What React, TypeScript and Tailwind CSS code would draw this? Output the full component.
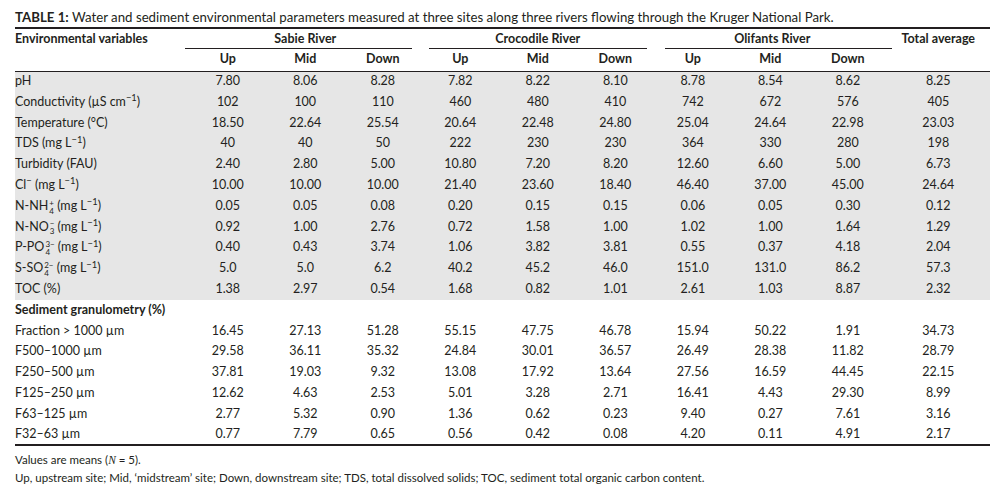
import React from "react";

type Row = { label: React.ReactNode; values: string[] };

// sub and sup stacked over one another, as in NH4+ / PO4 3-
const Stack = ({ sub, sup }: { sub: string; sup: string }) => (
  <span className="inline-flex flex-col align-middle text-[8px] leading-[8px] ml-[1px]">
    <span>{sup}</span>
    <span>{sub}</span>
  </span>
);

const mgL = (
  <>
    {" "}(mg L<sup>−1</sup>)
  </>
);

const water: Row[] = [
  { label: "pH", values: ["7.80", "8.06", "8.28", "7.82", "8.22", "8.10", "8.78", "8.54", "8.62", "8.25"] },
  {
    label: (
      <>
        Conductivity (µS cm<sup>−1</sup>)
      </>
    ),
    values: ["102", "100", "110", "460", "480", "410", "742", "672", "576", "405"],
  },
  { label: "Temperature (°C)", values: ["18.50", "22.64", "25.54", "20.64", "22.48", "24.80", "25.04", "24.64", "22.98", "23.03"] },
  { label: <>TDS{mgL}</>, values: ["40", "40", "50", "222", "230", "230", "364", "330", "280", "198"] },
  { label: "Turbidity (FAU)", values: ["2.40", "2.80", "5.00", "10.80", "7.20", "8.20", "12.60", "6.60", "5.00", "6.73"] },
  {
    label: (
      <>
        Cl<sup>−</sup>{mgL}
      </>
    ),
    values: ["10.00", "10.00", "10.00", "21.40", "23.60", "18.40", "46.40", "37.00", "45.00", "24.64"],
  },
  {
    label: (
      <>
        N-NH<Stack sub="4" sup="+" />{mgL}
      </>
    ),
    values: ["0.05", "0.05", "0.08", "0.20", "0.15", "0.15", "0.06", "0.05", "0.30", "0.12"],
  },
  {
    label: (
      <>
        N-NO<Stack sub="3" sup="−" />{mgL}
      </>
    ),
    values: ["0.92", "1.00", "2.76", "0.72", "1.58", "1.00", "1.02", "1.00", "1.64", "1.29"],
  },
  {
    label: (
      <>
        P-PO<Stack sub="4" sup="3−" />{mgL}
      </>
    ),
    values: ["0.40", "0.43", "3.74", "1.06", "3.82", "3.81", "0.55", "0.37", "4.18", "2.04"],
  },
  {
    label: (
      <>
        S-SO<Stack sub="4" sup="2−" />{mgL}
      </>
    ),
    values: ["5.0", "5.0", "6.2", "40.2", "45.2", "46.0", "151.0", "131.0", "86.2", "57.3"],
  },
  { label: "TOC (%)", values: ["1.38", "2.97", "0.54", "1.68", "0.82", "1.01", "2.61", "1.03", "8.87", "2.32"] },
];

const sediment: Row[] = [
  { label: "Fraction > 1000 µm", values: ["16.45", "27.13", "51.28", "55.15", "47.75", "46.78", "15.94", "50.22", "1.91", "34.73"] },
  { label: "F500–1000 µm", values: ["29.58", "36.11", "35.32", "24.84", "30.01", "36.57", "26.49", "28.38", "11.82", "28.79"] },
  { label: "F250–500 µm", values: ["37.81", "19.03", "9.32", "13.08", "17.92", "13.64", "27.56", "16.59", "44.45", "22.15"] },
  { label: "F125–250 µm", values: ["12.62", "4.63", "2.53", "5.01", "3.28", "2.71", "16.41", "4.43", "29.30", "8.99"] },
  { label: "F63–125 µm", values: ["2.77", "5.32", "0.90", "1.36", "0.62", "0.23", "9.40", "0.27", "7.61", "3.16"] },
  { label: "F32–63 µm", values: ["0.77", "7.79", "0.65", "0.56", "0.42", "0.08", "4.20", "0.11", "4.91", "2.17"] },
];

const DataRow = ({ row, last }: { row: Row; last?: boolean }) => (
  <tr className={last ? "h-[20.8px] border-b-2 border-[#231f20]" : "h-[20.8px]"}>
    <td className="text-left p-0 whitespace-nowrap">{row.label}</td>
    {row.values.map((v, i) => (
      <td key={i} className="text-center p-0">
        {v}
      </td>
    ))}
  </tr>
);

export default function App() {
  return (
    <div className="w-[1007px] h-[500px] bg-white pl-[15px] pr-[17px] pt-[8px] font-['Lato',sans-serif] text-[#231f20]">
      <p className="text-[13.25px] leading-[18px] pb-[1px] border-b-2 border-[#231f20] whitespace-nowrap">
        <b>TABLE 1:</b> Water and sediment environmental parameters measured at three sites along three rivers flowing
        through the Kruger National Park.
      </p>
      <table className="w-full table-fixed border-collapse text-[12.5px]">
        <colgroup>
          <col className="w-[174px]" />
          {Array.from({ length: 9 }).map((_, i) => (
            <col key={i} className="w-[77.5px]" />
          ))}
          <col />
        </colgroup>
        <thead className="font-bold">
          <tr>
            <th rowSpan={2} className="text-left align-top p-0 leading-[20px]">
              Environmental variables
            </th>
            <th colSpan={3} className="p-0 font-bold">
              <div className="h-[20px] leading-[20px] border-b border-[#231f20] ml-[-4px] mr-[10px] pl-[14px]">
                Sabie River
              </div>
            </th>
            <th colSpan={3} className="p-0 font-bold">
              <div className="h-[20px] leading-[20px] border-b border-[#231f20] ml-[7px] mr-[7px]">Crocodile River</div>
            </th>
            <th colSpan={3} className="p-0 font-bold">
              <div className="h-[20px] leading-[20px] border-b border-[#231f20] ml-[11px] mr-[-5px] pr-[12px]">
                Olifants River
              </div>
            </th>
            <th rowSpan={2} className="align-top p-0 leading-[20px]">
              Total average
            </th>
          </tr>
          <tr className="h-[22px] border-b border-[#231f20]">
            {["Up", "Mid", "Down", "Up", "Mid", "Down", "Up", "Mid", "Down"].map((h, i) => (
              <th key={i} className="p-0 font-bold">
                {h}
              </th>
            ))}
          </tr>
        </thead>
        <tbody className="bg-[#e6e6e6]">
          {water.map((r, i) => (
            <DataRow key={i} row={r} />
          ))}
        </tbody>
        <tbody>
          <tr className="h-[20.8px]">
            <td colSpan={11} className="p-0 font-bold text-left">
              Sediment granulometry (%)
            </td>
          </tr>
          {sediment.map((r, i) => (
            <DataRow key={i} row={r} last={i === sediment.length - 1} />
          ))}
        </tbody>
      </table>
      <div className="text-[11.5px] leading-[17px] pt-[5px]">
        <p>
          Values are means (<span className="font-['Liberation_Serif',serif] italic">N</span> = 5).
        </p>
        <p>
          Up, upstream site; Mid, ‘midstream’ site; Down, downstream site; TDS, total dissolved solids; TOC, sediment
          total organic carbon content.
        </p>
      </div>
    </div>
  );
}
